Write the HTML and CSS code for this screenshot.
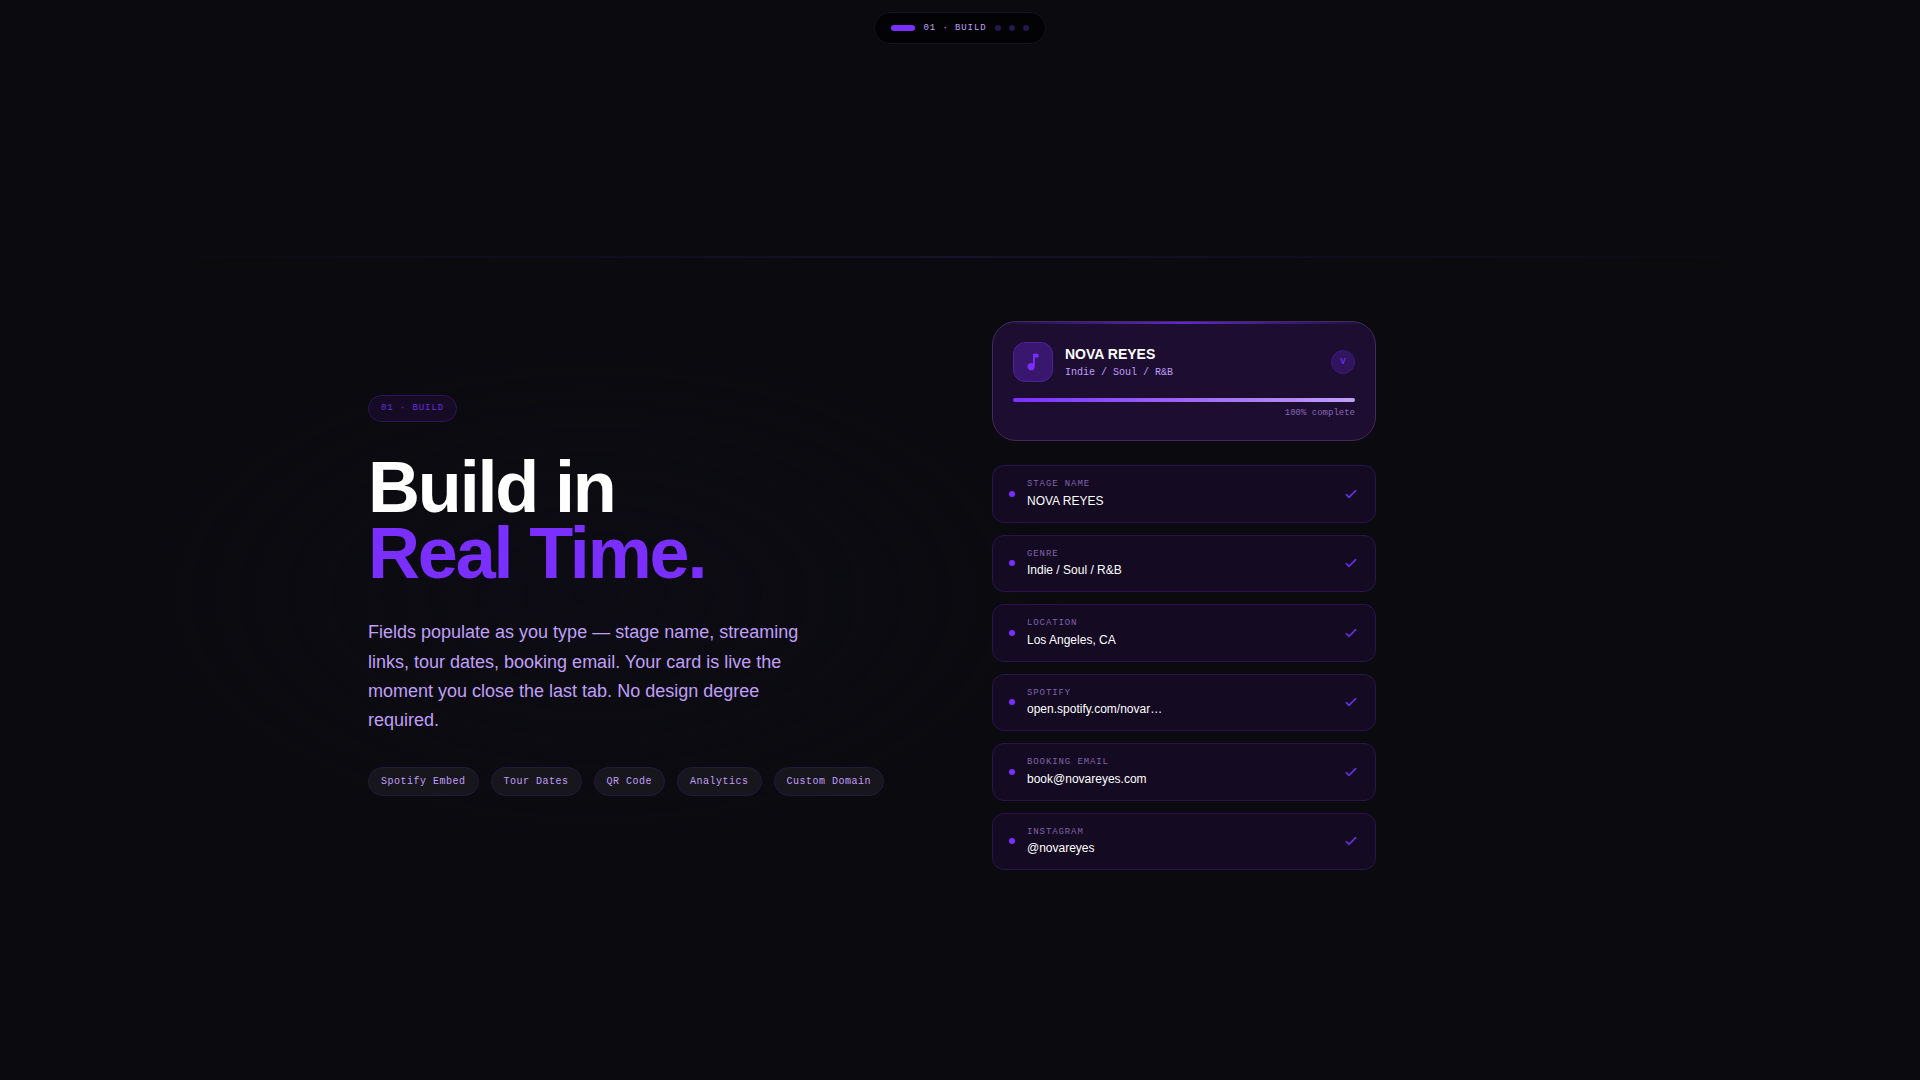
FILE: index.html
```html
<!DOCTYPE html>
<html lang="en">
<head>
<meta charset="utf-8">
<meta name="viewport" content="width=device-width, initial-scale=1">
<title>Build in Real Time</title>
<link rel="stylesheet" href="styles.css">
</head>
<body>
<header class="topbar">
  <div class="stepper">
    <span class="step-active"></span>
    <span class="step-label">01 · BUILD</span>
    <span class="step-dots"><i class="step-dot"></i><i class="step-dot"></i><i class="step-dot"></i></span>
  </div>
</header>
<main class="section">
  <div class="columns">
    <div class="intro">
      <span class="badge">01 · BUILD</span>
      <h1 class="title">Build in<br><span class="title-accent">Real Time.</span></h1>
      <p class="lead">Fields populate as you type — stage name, streaming links, tour dates, booking email. Your card is live the moment you close the last tab. No design degree required.</p>
      <ul class="tags">
        <li class="tag">Spotify Embed</li>
        <li class="tag">Tour Dates</li>
        <li class="tag">QR Code</li>
        <li class="tag">Analytics</li>
        <li class="tag">Custom Domain</li>
      </ul>
    </div>
    <div class="preview">
      <section class="card">
        <div class="card-head">
          <span class="card-icon">
            <svg width="22" height="22" viewBox="0 0 24 24" fill="currentColor" aria-hidden="true"><path d="M12 3v10.55A4 4 0 1 0 14 17V7h3q1 0 1-1V4q0-1-1-1z"/></svg>
          </span>
          <div class="card-text">
            <h2 class="card-name">NOVA REYES</h2>
            <p class="card-genre">Indie / Soul / R&amp;B</p>
          </div>
          <span class="card-mark">V</span>
        </div>
        <div class="progress"></div>
        <p class="progress-label">100% complete</p>
      </section>
      <dl class="fields">
        <div class="field"><i class="field-dot"></i><div class="field-text"><dt class="field-label">STAGE NAME</dt><dd class="field-value">NOVA REYES</dd></div><svg class="check" viewBox="0 0 24 24" aria-hidden="true"><path d="M5 13l4 4L19 7"/></svg></div>
        <div class="field"><i class="field-dot"></i><div class="field-text"><dt class="field-label">GENRE</dt><dd class="field-value">Indie / Soul / R&amp;B</dd></div><svg class="check" viewBox="0 0 24 24" aria-hidden="true"><path d="M5 13l4 4L19 7"/></svg></div>
        <div class="field"><i class="field-dot"></i><div class="field-text"><dt class="field-label">LOCATION</dt><dd class="field-value">Los Angeles, CA</dd></div><svg class="check" viewBox="0 0 24 24" aria-hidden="true"><path d="M5 13l4 4L19 7"/></svg></div>
        <div class="field"><i class="field-dot"></i><div class="field-text"><dt class="field-label">SPOTIFY</dt><dd class="field-value">open.spotify.com/novar…</dd></div><svg class="check" viewBox="0 0 24 24" aria-hidden="true"><path d="M5 13l4 4L19 7"/></svg></div>
        <div class="field"><i class="field-dot"></i><div class="field-text"><dt class="field-label">BOOKING EMAIL</dt><dd class="field-value">book@novareyes.com</dd></div><svg class="check" viewBox="0 0 24 24" aria-hidden="true"><path d="M5 13l4 4L19 7"/></svg></div>
        <div class="field"><i class="field-dot"></i><div class="field-text"><dt class="field-label">INSTAGRAM</dt><dd class="field-value">@novareyes</dd></div><svg class="check" viewBox="0 0 24 24" aria-hidden="true"><path d="M5 13l4 4L19 7"/></svg></div>
      </dl>
    </div>
  </div>
</main>
</body>
</html>
```
FILE: styles.css
```css
:root {
  --bg: #0a0a0f;
  --violet: #7b2fff;
  --lilac: #c09ff8;
  --mono: "Liberation Mono", monospace;
}

* { box-sizing: border-box; margin: 0; padding: 0; }

body {
  min-height: 100vh;
  background: var(--bg);
  color: #fff;
  font-family: "Liberation Sans", Arial, sans-serif;
  line-height: 1.5;
}

.topbar {
  display: flex;
  justify-content: center;
  padding-top: 12px;
}

.stepper {
  display: flex;
  align-items: center;
  gap: 8px;
  padding: 8px 16px;
  border: 1px solid #151126;
  border-radius: 999px;
  background: #030306;
}

.step-active { width: 24px; height: 6px; border-radius: 3px; background: var(--violet); }
.step-label { font: 9px/14px var(--mono); letter-spacing: 0.1em; color: var(--lilac); }
.step-dots { display: flex; gap: 8px; }
.step-dot { width: 6px; height: 6px; border-radius: 50%; background: #27174c; }

.section {
  margin-top: 212px;
  padding: 63px 24px;
  border-top: 2px solid;
  border-image: linear-gradient(90deg, transparent 5%, #17122b 50%, transparent 95%) 2;
  background: radial-gradient(ellipse 680px 370px at 31% 50%, #0d0c14, transparent 70%);
}

.columns {
  display: grid;
  grid-template-columns: 1fr 1fr;
  align-items: center;
  gap: 64px;
  max-width: 1184px;
  margin: 0 auto;
}

.intro { display: flex; flex-direction: column; align-items: flex-start; gap: 32px; }

.badge {
  padding: 6px 12px;
  border: 1px solid #2d1558;
  border-radius: 999px;
  background: #150b24;
  font: 9px/1.5 var(--mono);
  letter-spacing: 0.1em;
  color: #6c2be0;
}

.title { font-size: 72px; line-height: 66px; letter-spacing: -0.03em; font-weight: 700; }
.title-accent { color: var(--violet); }
.lead { max-width: 448px; font-size: 18px; line-height: 1.625; color: var(--lilac); }

.tags { display: flex; gap: 12px; list-style: none; }
.tag {
  padding: 6px 12px;
  border: 1px solid #211a3a;
  border-radius: 999px;
  background: #17161c;
  font: 10px/1.5 var(--mono);
  letter-spacing: 0.05em;
  color: var(--lilac);
  white-space: nowrap;
}

.preview { display: flex; flex-direction: column; gap: 24px; width: 100%; max-width: 384px; }

.card {
  position: relative;
  overflow: hidden;
  padding: 20px;
  border: 1px solid #402b5e;
  border-radius: 24px;
  background: #1d0d30;
}
.card::before {
  content: "";
  position: absolute;
  inset: 0 0 auto;
  height: 2px;
  background: linear-gradient(90deg, transparent, #6127cd, transparent);
}

.card-head { display: flex; align-items: center; gap: 12px; margin-bottom: 16px; }
.card-icon {
  display: grid;
  place-items: center;
  width: 40px;
  height: 40px;
  border: 1px solid #4d2198;
  border-radius: 12px;
  background: #39176f;
  color: var(--violet);
}
.card-text { flex: 1; }
.card-name { font-size: 14px; }
.card-genre { font: 10px/1.5 var(--mono); color: var(--lilac); }
.card-mark {
  display: grid;
  place-items: center;
  width: 24px;
  height: 24px;
  border: 1px solid #3d1a7c;
  border-radius: 50%;
  background: #30145d;
  font: 700 9px/12px var(--mono);
  color: #6f2be8;
}

.progress { height: 4px; border-radius: 2px; background: linear-gradient(90deg, var(--violet), var(--lilac)); }
.progress-label { margin-top: 4px; font: 9px/14px var(--mono); text-align: right; color: #8669b3; }

.fields { display: flex; flex-direction: column; gap: 12px; }
.field {
  display: flex;
  align-items: center;
  gap: 12px;
  padding: 12px 16px;
  border: 1px solid #29154c;
  border-radius: 12px;
  background: #140a22;
}
.field-dot { width: 6px; height: 6px; border-radius: 50%; background: var(--violet); }
.field-text { flex: 1; min-width: 0; }
.field-label { font: 9px/1.5 var(--mono); letter-spacing: 0.1em; color: #7f64ab; }
.field-value { font-size: 12px; }
.check {
  width: 16px;
  height: 16px;
  fill: none;
  stroke: #6a2ee0;
  stroke-width: 2.5;
  stroke-linecap: round;
  stroke-linejoin: round;
}

@media (max-width: 900px) {
  .columns { grid-template-columns: 1fr; }
  .tags { flex-wrap: wrap; }
}
```
